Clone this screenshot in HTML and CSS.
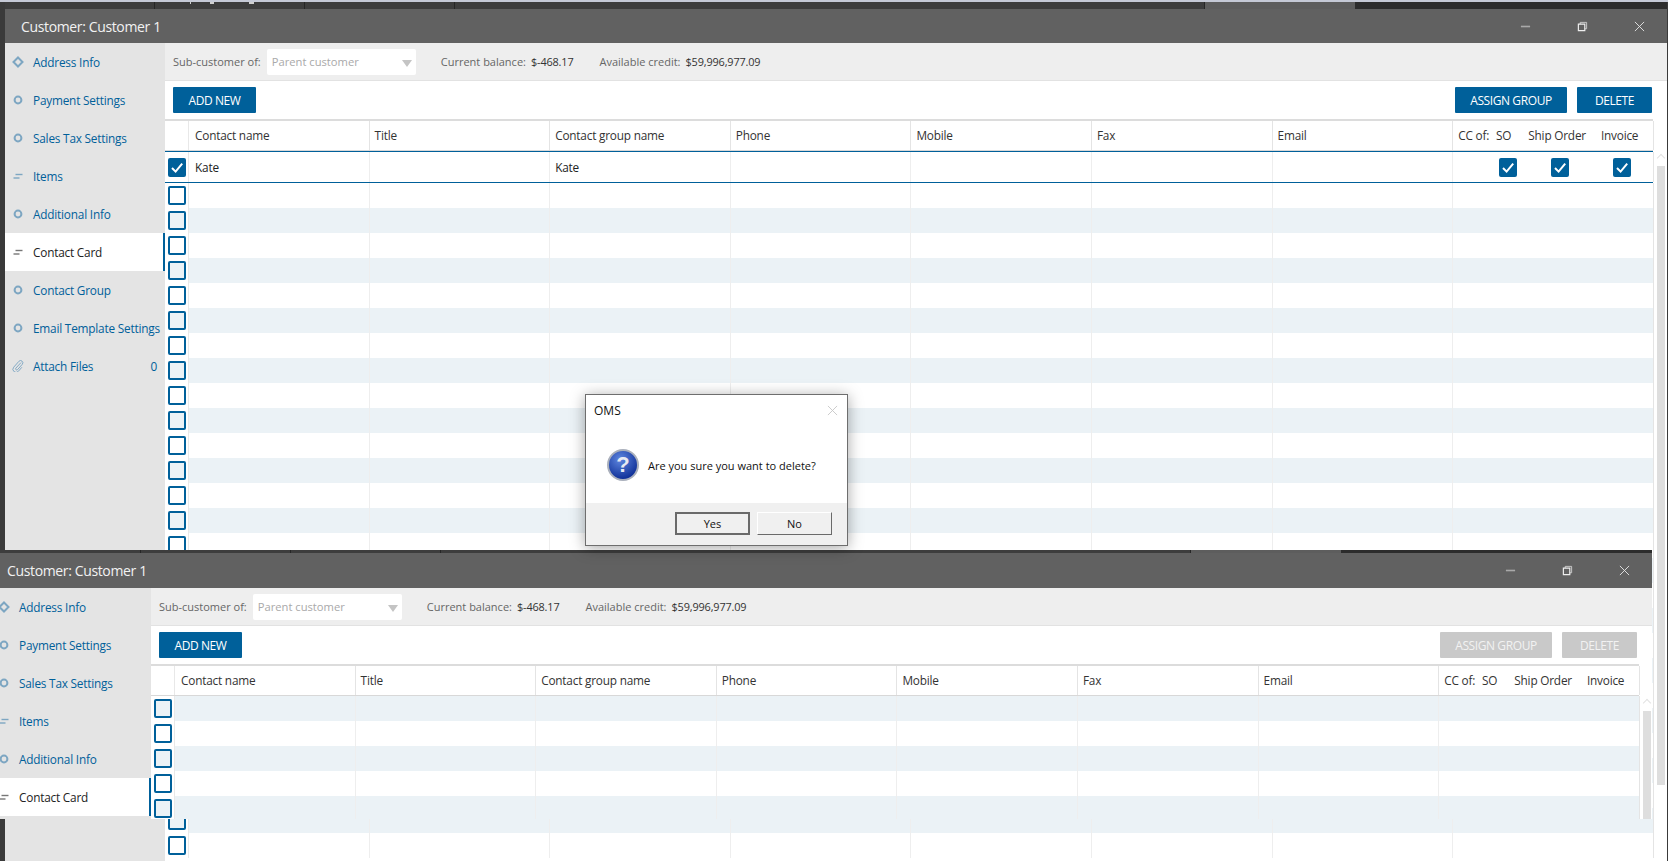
FILE: index.html
```html
<!DOCTYPE html>
<html lang="en">
<head>
<meta charset="utf-8">
<title>Customer: Customer 1</title>
<link rel="stylesheet" href="styles.css">
</head>
<body>
<svg class="defs" width="0" height="0" aria-hidden="true">
  <symbol id="i-dot" viewBox="0 0 12 12"><circle cx="6" cy="6" r="3.4" fill="none" stroke="#7da6c2" stroke-width="2"/></symbol>
  <symbol id="i-dia" viewBox="0 0 12 12"><path d="M6 1.500 10.500 6 6 10.500 1.500 6Z" fill="none" stroke="#7da6c2" stroke-width="2"/></symbol>
  <symbol id="i-bars" viewBox="0 0 12 12"><path d="M3.500 4.500H10.500" stroke="#7da6c2" stroke-width="1.400"/><path d="M1.500 8H7.500" stroke="#7da6c2" stroke-width="1.400"/></symbol>
  <symbol id="i-bars-dark" viewBox="0 0 12 12"><path d="M3.500 4.500H10.500" stroke="#777" stroke-width="1.400"/><path d="M1.500 8H7.500" stroke="#777" stroke-width="1.400"/></symbol>
  <symbol id="i-clip" viewBox="0 0 14 14"><path d="M10.500 3 4.500 9.500a1.300 1.300 0 0 0 2 1.700L12 5a2.600 2.600 0 0 0-4-3.400L2 8.400a3.600 3.600 0 0 0 5.400 4.800L11.500 8.500" fill="none" stroke="#7da6c2" stroke-width="1.100"/></symbol>
  <symbol id="i-check" viewBox="0 0 18 19"><path d="M4 10 7.600 13.600 14.200 5.600" fill="none" stroke="#fff" stroke-width="2"/></symbol>
</svg>

<div class="page-strip"></div>

<section class="win win-back">
  <div class="tabs"><span class="tab"></span><span class="tab tab-marks"></span><span class="tab"></span><span class="tab tab-wide"></span><span class="tab tab-hi"></span></div>
  <header class="titlebar">
    <span class="title">Customer: Customer 1</span>
    <span class="wbtns">
      <svg class="wbtn" viewBox="0 0 12 12"><path d="M1 6H11" stroke="#a9a9a9" stroke-width="1.800"/></svg>
      <svg class="wbtn" viewBox="0 0 12 12"><path d="M3.500 3.500V1.500H10.500V8.500H8.500" fill="none" stroke="#cfcfcf" stroke-width="1"/><path d="M1.500 3.500H8.500V10.500H1.500Z" fill="none" stroke="#eee" stroke-width="1.300"/></svg>
      <svg class="wbtn" viewBox="0 0 12 12"><path d="M1 1 11 11M11 1 1 11" stroke="#e6e6e6" stroke-width="1"/></svg>
    </span>
  </header>
  <div class="body">
    <nav class="side">
      <a class="item"><svg class="ic"><use href="#i-dia"/></svg>Address Info</a>
      <a class="item"><svg class="ic"><use href="#i-dot"/></svg>Payment Settings</a>
      <a class="item"><svg class="ic"><use href="#i-dot"/></svg>Sales Tax Settings</a>
      <a class="item"><svg class="ic"><use href="#i-bars"/></svg>Items</a>
      <a class="item"><svg class="ic"><use href="#i-dot"/></svg>Additional Info</a>
      <a class="item active"><svg class="ic"><use href="#i-bars-dark"/></svg>Contact Card</a>
      <a class="item"><svg class="ic"><use href="#i-dot"/></svg>Contact Group</a>
      <a class="item"><svg class="ic"><use href="#i-dot"/></svg>Email Template Settings</a>
      <a class="item"><svg class="ic"><use href="#i-clip"/></svg>Attach Files<span class="count">0</span></a>
    </nav>
    <div class="main">
      <div class="sub">
        <span class="lbl">Sub-customer of:</span>
        <span class="combo">Parent customer<i class="caret"></i></span>
        <span class="lbl gap-a">Current balance:</span><span class="val">$-468.17</span>
        <span class="lbl gap-b">Available credit:</span><span class="val">$59,996,977.09</span>
      </div>
      <div class="toolbar">
        <button class="btn">ADD NEW</button>
        <span class="spacer"></span>
        <button class="btn btn-assign">ASSIGN GROUP</button>
        <button class="btn btn-del">DELETE</button>
      </div>
      <div class="table">
        <div class="row head">
          <span class="c c0"></span><span class="c">Contact name</span><span class="c">Title</span><span class="c">Contact group name</span><span class="c">Phone</span><span class="c">Mobile</span><span class="c">Fax</span><span class="c">Email</span>
          <span class="c cc"><b>CC of:</b><b class="so">SO</b><b class="ship">Ship Order</b><b class="inv">Invoice</b></span>
        </div>
        <div class="row sel">
          <span class="c c0"><i class="cb on"><svg><use href="#i-check"/></svg></i></span><span class="c">Kate</span><span class="c"></span><span class="c">Kate</span><span class="c"></span><span class="c"></span><span class="c"></span><span class="c"></span>
          <span class="c cc-checks"><i class="cb on"><svg><use href="#i-check"/></svg></i><i class="cb on"><svg><use href="#i-check"/></svg></i><i class="cb on cb-inv"><svg><use href="#i-check"/></svg></i></span>
        </div>
        <div class="rows stripes-even">
          <div class="row"><span class="c c0"><i class="cb"></i></span><span class="c"></span><span class="c"></span><span class="c"></span><span class="c"></span><span class="c"></span><span class="c"></span><span class="c"></span><span class="c"></span></div>
          <div class="row"><span class="c c0"><i class="cb"></i></span><span class="c"></span><span class="c"></span><span class="c"></span><span class="c"></span><span class="c"></span><span class="c"></span><span class="c"></span><span class="c"></span></div>
          <div class="row"><span class="c c0"><i class="cb"></i></span><span class="c"></span><span class="c"></span><span class="c"></span><span class="c"></span><span class="c"></span><span class="c"></span><span class="c"></span><span class="c"></span></div>
          <div class="row"><span class="c c0"><i class="cb"></i></span><span class="c"></span><span class="c"></span><span class="c"></span><span class="c"></span><span class="c"></span><span class="c"></span><span class="c"></span><span class="c"></span></div>
          <div class="row"><span class="c c0"><i class="cb"></i></span><span class="c"></span><span class="c"></span><span class="c"></span><span class="c"></span><span class="c"></span><span class="c"></span><span class="c"></span><span class="c"></span></div>
          <div class="row"><span class="c c0"><i class="cb"></i></span><span class="c"></span><span class="c"></span><span class="c"></span><span class="c"></span><span class="c"></span><span class="c"></span><span class="c"></span><span class="c"></span></div>
          <div class="row"><span class="c c0"><i class="cb"></i></span><span class="c"></span><span class="c"></span><span class="c"></span><span class="c"></span><span class="c"></span><span class="c"></span><span class="c"></span><span class="c"></span></div>
          <div class="row"><span class="c c0"><i class="cb"></i></span><span class="c"></span><span class="c"></span><span class="c"></span><span class="c"></span><span class="c"></span><span class="c"></span><span class="c"></span><span class="c"></span></div>
          <div class="row"><span class="c c0"><i class="cb"></i></span><span class="c"></span><span class="c"></span><span class="c"></span><span class="c"></span><span class="c"></span><span class="c"></span><span class="c"></span><span class="c"></span></div>
          <div class="row"><span class="c c0"><i class="cb"></i></span><span class="c"></span><span class="c"></span><span class="c"></span><span class="c"></span><span class="c"></span><span class="c"></span><span class="c"></span><span class="c"></span></div>
          <div class="row"><span class="c c0"><i class="cb"></i></span><span class="c"></span><span class="c"></span><span class="c"></span><span class="c"></span><span class="c"></span><span class="c"></span><span class="c"></span><span class="c"></span></div>
          <div class="row"><span class="c c0"><i class="cb"></i></span><span class="c"></span><span class="c"></span><span class="c"></span><span class="c"></span><span class="c"></span><span class="c"></span><span class="c"></span><span class="c"></span></div>
          <div class="row"><span class="c c0"><i class="cb"></i></span><span class="c"></span><span class="c"></span><span class="c"></span><span class="c"></span><span class="c"></span><span class="c"></span><span class="c"></span><span class="c"></span></div>
          <div class="row"><span class="c c0"><i class="cb"></i></span><span class="c"></span><span class="c"></span><span class="c"></span><span class="c"></span><span class="c"></span><span class="c"></span><span class="c"></span><span class="c"></span></div>
          <div class="row"><span class="c c0"><i class="cb"></i></span><span class="c"></span><span class="c"></span><span class="c"></span><span class="c"></span><span class="c"></span><span class="c"></span><span class="c"></span><span class="c"></span></div>
          <div class="row"><span class="c c0"><i class="cb"></i></span><span class="c"></span><span class="c"></span><span class="c"></span><span class="c"></span><span class="c"></span><span class="c"></span><span class="c"></span><span class="c"></span></div>
          <div class="row"><span class="c c0"><i class="cb"></i></span><span class="c"></span><span class="c"></span><span class="c"></span><span class="c"></span><span class="c"></span><span class="c"></span><span class="c"></span><span class="c"></span></div>
          <div class="row"><span class="c c0"><i class="cb"></i></span><span class="c"></span><span class="c"></span><span class="c"></span><span class="c"></span><span class="c"></span><span class="c"></span><span class="c"></span><span class="c"></span></div>
          <div class="row"><span class="c c0"><i class="cb"></i></span><span class="c"></span><span class="c"></span><span class="c"></span><span class="c"></span><span class="c"></span><span class="c"></span><span class="c"></span><span class="c"></span></div>
          <div class="row"><span class="c c0"><i class="cb"></i></span><span class="c"></span><span class="c"></span><span class="c"></span><span class="c"></span><span class="c"></span><span class="c"></span><span class="c"></span><span class="c"></span></div>
          <div class="row"><span class="c c0"><i class="cb"></i></span><span class="c"></span><span class="c"></span><span class="c"></span><span class="c"></span><span class="c"></span><span class="c"></span><span class="c"></span><span class="c"></span></div>
          <div class="row"><span class="c c0"><i class="cb"></i></span><span class="c"></span><span class="c"></span><span class="c"></span><span class="c"></span><span class="c"></span><span class="c"></span><span class="c"></span><span class="c"></span></div>
          <div class="row"><span class="c c0"><i class="cb"></i></span><span class="c"></span><span class="c"></span><span class="c"></span><span class="c"></span><span class="c"></span><span class="c"></span><span class="c"></span><span class="c"></span></div>
          <div class="row"><span class="c c0"><i class="cb"></i></span><span class="c"></span><span class="c"></span><span class="c"></span><span class="c"></span><span class="c"></span><span class="c"></span><span class="c"></span><span class="c"></span></div>
          <div class="row"><span class="c c0"><i class="cb"></i></span><span class="c"></span><span class="c"></span><span class="c"></span><span class="c"></span><span class="c"></span><span class="c"></span><span class="c"></span><span class="c"></span></div>
          <div class="row"><span class="c c0"><i class="cb"></i></span><span class="c"></span><span class="c"></span><span class="c"></span><span class="c"></span><span class="c"></span><span class="c"></span><span class="c"></span><span class="c"></span></div>
          <div class="row"><span class="c c0"><i class="cb"></i></span><span class="c"></span><span class="c"></span><span class="c"></span><span class="c"></span><span class="c"></span><span class="c"></span><span class="c"></span><span class="c"></span></div>
        </div>
        <div class="scroll scroll-back"><i class="chev"></i><i class="thumb"></i></div>
      </div>
    </div>
  </div>
</section>

<section class="win win-front">
  <div class="tabs"><span class="tab"></span><span class="tab"></span><span class="tab"></span><span class="tab tab-wide"></span><span class="tab tab-hi"></span></div>
  <header class="titlebar">
    <span class="title">Customer: Customer 1</span>
    <span class="wbtns">
      <svg class="wbtn" viewBox="0 0 12 12"><path d="M1 6H11" stroke="#a9a9a9" stroke-width="1.800"/></svg>
      <svg class="wbtn" viewBox="0 0 12 12"><path d="M3.500 3.500V1.500H10.500V8.500H8.500" fill="none" stroke="#cfcfcf" stroke-width="1"/><path d="M1.500 3.500H8.500V10.500H1.500Z" fill="none" stroke="#eee" stroke-width="1.300"/></svg>
      <svg class="wbtn" viewBox="0 0 12 12"><path d="M1 1 11 11M11 1 1 11" stroke="#e6e6e6" stroke-width="1"/></svg>
    </span>
  </header>
  <div class="body">
    <nav class="side">
      <a class="item"><svg class="ic"><use href="#i-dia"/></svg>Address Info</a>
      <a class="item"><svg class="ic"><use href="#i-dot"/></svg>Payment Settings</a>
      <a class="item"><svg class="ic"><use href="#i-dot"/></svg>Sales Tax Settings</a>
      <a class="item"><svg class="ic"><use href="#i-bars"/></svg>Items</a>
      <a class="item"><svg class="ic"><use href="#i-dot"/></svg>Additional Info</a>
      <a class="item active"><svg class="ic"><use href="#i-bars-dark"/></svg>Contact Card</a>
    </nav>
    <div class="main">
      <div class="sub">
        <span class="lbl">Sub-customer of:</span>
        <span class="combo">Parent customer<i class="caret"></i></span>
        <span class="lbl gap-a">Current balance:</span><span class="val">$-468.17</span>
        <span class="lbl gap-b">Available credit:</span><span class="val">$59,996,977.09</span>
      </div>
      <div class="toolbar">
        <button class="btn">ADD NEW</button>
        <span class="spacer"></span>
        <button class="btn btn-assign off">ASSIGN GROUP</button>
        <button class="btn btn-del off">DELETE</button>
      </div>
      <div class="table">
        <div class="row head">
          <span class="c c0"></span><span class="c">Contact name</span><span class="c">Title</span><span class="c">Contact group name</span><span class="c">Phone</span><span class="c">Mobile</span><span class="c">Fax</span><span class="c">Email</span>
          <span class="c cc"><b>CC of:</b><b class="so">SO</b><b class="ship">Ship Order</b><b class="inv">Invoice</b></span>
        </div>
        <div class="rows stripes-odd">
          <div class="row"><span class="c c0"><i class="cb"></i></span><span class="c"></span><span class="c"></span><span class="c"></span><span class="c"></span><span class="c"></span><span class="c"></span><span class="c"></span><span class="c"></span></div>
          <div class="row"><span class="c c0"><i class="cb"></i></span><span class="c"></span><span class="c"></span><span class="c"></span><span class="c"></span><span class="c"></span><span class="c"></span><span class="c"></span><span class="c"></span></div>
          <div class="row"><span class="c c0"><i class="cb"></i></span><span class="c"></span><span class="c"></span><span class="c"></span><span class="c"></span><span class="c"></span><span class="c"></span><span class="c"></span><span class="c"></span></div>
          <div class="row"><span class="c c0"><i class="cb"></i></span><span class="c"></span><span class="c"></span><span class="c"></span><span class="c"></span><span class="c"></span><span class="c"></span><span class="c"></span><span class="c"></span></div>
          <div class="row"><span class="c c0"><i class="cb"></i></span><span class="c"></span><span class="c"></span><span class="c"></span><span class="c"></span><span class="c"></span><span class="c"></span><span class="c"></span><span class="c"></span></div>
        </div>
        <div class="scroll scroll-front"><i class="chev"></i><i class="thumb"></i></div>
      </div>
    </div>
  </div>
</section>

<div class="dialog" role="dialog">
  <div class="dlg-top">
    <div class="dlg-title"><span>OMS</span>
      <svg class="dlg-x" viewBox="0 0 12 12"><path d="M1 1 11 11M11 1 1 11" stroke="#c8c8c8" stroke-width="1"/></svg>
    </div>
    <div class="dlg-msg">
      <span class="qicon">?</span>
      <span>Are you sure you want to delete?</span>
    </div>
  </div>
  <div class="dlg-foot">
    <button class="wb wb-def">Yes</button>
    <button class="wb">No</button>
  </div>
</div>
</body>
</html>
```
FILE: styles.css
```css
* { box-sizing: border-box; }
html, body { margin: 0; height: 100%; overflow: hidden; }
body { position: relative; background: #3a3a3a; font-family: "Open Sans", "Noto Sans", sans-serif; font-size: 12px; color: #333; }
.defs { position: absolute; }
.page-strip { height: 2px; background: #c5c9d6; }

.win { position: absolute; display: flex; flex-direction: column; overflow: hidden; }
.win-back { left: 5px; top: 2px; width: 1662px; height: 859px; }
.win-front { left: -14px; top: 550px; width: 1666px; height: 269px; }

.tabs { height: 7px; background: #2c2c2c; display: flex; flex: none; }
.win-front .tabs { height: 3px; padding-left: 5px; }
.tab { width: 150px; flex: none; border-right: 1px solid #262626; background: #3d3d3d; }
.tab-wide { width: 750px; }
.tab-hi { background: #5d5d5d; border-right: 0; }
.tab-marks {
  background-image: linear-gradient(#cfcfcf, #cfcfcf), linear-gradient(#cfcfcf, #cfcfcf), linear-gradient(#cfcfcf, #cfcfcf);
  background-repeat: no-repeat;
  background-size: 1px 2px, 4px 2px, 5px 2px;
  background-position: 35px 0, 55px 0, 94px 0;
}

.titlebar { height: 34px; flex: none; background: #616161; display: flex; align-items: center; color: #f2f2f2; }
.win-front .titlebar { height: 35px; }
.title { font-size: 14px; padding-left: 16px; letter-spacing: -.36px; }
.win-front .title { padding-left: 21px; }
.wbtns { margin-left: auto; display: flex; align-items: center; gap: 46px; padding-right: 22px; }
.wbtn { width: 11px; height: 11px; display: block; }

.body { flex: 1; display: flex; min-height: 0; }
.side { width: 160px; flex: none; background: #e4e4e4; }
.win-front .side { width: 165px; }
.item { height: 38px; display: flex; align-items: center; color: #00609a; font-size: 11.8px; padding-left: 7px; letter-spacing: -.2px; white-space: nowrap; }
.win-front .item { padding-left: 12px; }
.item.active { background: #fff; color: #222; box-shadow: inset -2px 0 0 #00609a; }
.ic { width: 12px; height: 12px; margin-right: 9px; flex: none; }
.count { margin-left: auto; padding-right: 8px; }

.main { flex: 1; min-width: 0; background: #fff; display: flex; flex-direction: column; }
.sub { height: 38px; flex: none; background: #eee; border-bottom: 1px solid #e2e2e2; display: flex; align-items: center; padding-left: 8px; font-size: 11px; }
.lbl { color: #666; margin-right: 5px; }
.combo { width: 149px; height: 26px; margin-left: 1px; background: #fff; border-radius: 2px; color: #a9a9a9; font-size: 11.2px; display: flex; align-items: center; padding-left: 5px; position: relative; }
.caret { position: absolute; right: 4px; top: 11px; border: 5px solid transparent; border-top: 7px solid #c4c4c4; border-bottom: 0; }
.gap-a { margin-left: 25px; }
.gap-b { margin-left: 26px; }
.val { color: #333; font-size: 10.9px; letter-spacing: -.15px; }

.toolbar { height: 38px; flex: none; display: flex; align-items: center; padding: 0 15px 0 8px; gap: 10px; }
.spacer { flex: 1; }
.btn { height: 26px; width: 83px; border: 0; border-radius: 1px; background: #00609a; color: #fff; font: 12px "Open Sans", "Noto Sans", sans-serif; letter-spacing: -.4px; padding: 0; }
.btn-assign { width: 112px; }
.btn-del { width: 75px; }
.btn.off { background: #c9c9c9; color: #f2f2f2; }

.table { position: relative; flex: 1; min-height: 0; font-size: 11.8px; letter-spacing: -.2px; }
.row { display: grid; grid-template-columns: 24px repeat(7, 180.6px) 200.8px; height: 25px; width: 1488px; }
.row .c { border-right: 1px solid #eee; padding-left: 5px; display: flex; align-items: center; white-space: nowrap; min-width: 0; color: #222; }
.row .c:nth-child(2) { padding-left: 6px; }
.row .c:last-child { border-right: 1px solid #e4e4e4; padding-left: 0; }
.row .c.c0 { padding-left: 3px; border-right-color: #e8e8e8; }
.head { height: 32px; border-top: 2px solid #dcdcdc; border-bottom: 1px solid #d8d8d8; }
.head .c { color: #333; border-right-color: #e4e4e4; padding-bottom: 2px; }
.cc b { font-weight: 400; padding-left: 5px; flex: none; }
.cc .so { padding-left: 7px; }
.cc .ship { padding-left: 17px; }
.cc .inv { padding-left: 15px; }
.sel { height: 32px; border-top: 1px solid #00609a; border-bottom: 1px solid #00609a; }
.row .c.cc-checks { padding-left: 46px; gap: 34px; }
.cb-inv { margin-left: 10px; }
.cb { width: 18px; height: 19px; display: block; flex: none; border: 2.4px solid #00609a; border-radius: 2px; background: #fff; }
.cb.on { background: #00609a; border: 0; }
.cb svg { width: 18px; height: 19px; display: block; }
.stripes-even .row:nth-child(even), .stripes-odd .row:nth-child(odd) { background: #ebf2f6; }
.stripes-even .row .c0, .stripes-odd .row .c0 { background: #fff; }
.stripes-even .row:nth-child(even) .cb, .stripes-odd .row:nth-child(odd) .cb { background: #ebf2f6; }
.scroll { position: absolute; top: 0; bottom: 0; left: 1492px; width: 8px; }
.thumb { position: absolute; left: 0; right: 0; background: #dedede; display: block; }
.scroll-back .thumb { top: 47px; height: 619px; }
.scroll-front .thumb { top: 47px; bottom: 0; }
.chev { position: absolute; left: 1px; top: 36px; width: 6px; height: 6px; border-left: 1px solid #e2e2e2; border-top: 1px solid #e2e2e2; transform: rotate(45deg); }

.dialog { position: absolute; left: 585px; top: 394px; width: 263px; height: 152px; border: 1px solid #6e6e6e; background: #fff; box-shadow: 0 2px 14px rgba(0,0,0,.35); font-family: "Open Sans", "Noto Sans", sans-serif; font-size: 11px; color: #111; display: flex; flex-direction: column; }
.dlg-top { flex: 1; }
.dlg-title { height: 30px; padding: 1px 10px 0 8px; display: flex; align-items: center; justify-content: space-between; font-size: 12px; }
.dlg-x { width: 11px; height: 11px; margin-right: -1px; }
.dlg-msg { display: flex; align-items: center; gap: 9px; padding: 24px 0 0 21px; }
.qicon { width: 32px; height: 32px; border-radius: 50%; border: 2px solid #aab0bc; background: radial-gradient(circle at 40% 30%, #5f87e0, #12339a 75%); color: #e8eaf2; font: 700 22px "Liberation Sans", sans-serif; display: flex; align-items: center; justify-content: center; }
.dlg-foot { height: 42px; flex: none; background: #f0f0f0; display: flex; align-items: flex-start; justify-content: flex-end; gap: 7px; padding: 9px 15px 0 0; }
.wb { width: 75px; height: 23px; background: #f0f0f0; border: 1px solid; border-color: #fff #6a6a6a #6a6a6a #fff; font: 11px "Open Sans", "Noto Sans", sans-serif; color: #111; padding: 0 0 1px; }
.wb-def { border: 2px solid #6a6a6a; }
```
